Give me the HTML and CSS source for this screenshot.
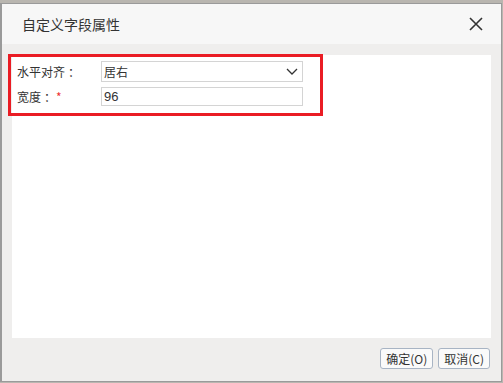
FILE: index.html
```html
<!DOCTYPE html>
<html lang="zh-CN">
<head>
  <meta charset="UTF-8">
  <title>自定义字段属性</title>
  <link rel="stylesheet" href="styles.css">
</head>
<body>
  <div class="dialog">
    <div class="dialog-header">
      <span class="dialog-title">自定义字段属性</span>
      <span class="dialog-close">
        <svg width="14" height="14" viewBox="0 0 14 14"><path d="M1 1L13 13M13 1L1 13" stroke="#333" stroke-width="1.6" fill="none"/></svg>
      </span>
    </div>
    <div class="dialog-body">
      <div class="panel">
        <div class="field-box">
          <div class="row">
            <label class="label">水平对齐<span class="colon">：</span></label>
            <div class="select">
              <span>居右</span>
              <svg width="12" height="8" viewBox="0 0 12 8"><path d="M1 1L6 6L11 1" stroke="#333" stroke-width="1.3" fill="none"/></svg>
            </div>
          </div>
          <div class="row">
            <label class="label">宽度<span class="colon">：</span><span class="req">*</span></label>
            <input class="input" type="text" value="96">
          </div>
        </div>
      </div>
      <div class="footer">
        <button class="btn">确定(O)</button>
        <button class="btn">取消(C)</button>
      </div>
    </div>
  </div>
</body>
</html>
```

FILE: styles.css
```css
* {
  box-sizing: border-box;
}
body {
  margin: 0;
  padding-top: 3px;
  background: #b9b6b0;
  font-family: "Noto Sans CJK SC", "Liberation Sans", sans-serif;
  font-size: 12px;
  color: #333;
  height: 383px;
  overflow: hidden;
}
.dialog {
  width: 502px;
  height: 379px;
  border: 1px solid #9a9a9a;
  border-left-width: 2px;
  background: #efeeed;
  display: flex;
  flex-direction: column;
}
.dialog-header {
  height: 40px;
  background: #f7f7f7;
  display: flex;
  align-items: center;
  justify-content: space-between;
  padding: 0 18px 0 20px;
}
.dialog-title {
  font-size: 14px;
  color: #333;
}
.dialog-close {
  display: flex;
}
.dialog-body {
  flex: 1;
  padding: 11px 9px 0 10px;
  display: flex;
  flex-direction: column;
}
.panel {
  height: 283px;
  background: #fff;
  width: 479px;
  position: relative;
}
.field-box {
  position: absolute;
  left: -4px;
  top: -1px;
  width: 315px;
  height: 62px;
  border: 3px solid #ea1c24;
  padding: 4px 0 0 6px;
  display: flex;
  flex-direction: column;
  gap: 5px;
}
.row {
  display: flex;
  align-items: center;
}
.label {
  width: 84px;
  white-space: nowrap;
}
.colon {
  display: inline-block;
  padding: 0 4px 0 3px;
}
.req {
  color: #e33;
  margin-left: -4px;
}
.select {
  width: 202px;
  height: 21px;
  border: 1px solid #d4d4d4;
  display: flex;
  align-items: center;
  justify-content: space-between;
  padding: 0 4px 0 2px;
}
.input {
  width: 202px;
  height: 19px;
  border: 1px solid #d4d4d4;
  padding: 0 2px;
  font-family: "Liberation Sans", sans-serif;
  font-size: 13px;
  color: #333;
  outline: none;
}
.footer {
  display: flex;
  justify-content: flex-end;
  gap: 5px;
  padding: 10px 2px 0 0;
}
.btn {
  height: 21px;
  padding: 0 5px;
  border: 1px solid #a8b4c4;
  border-radius: 3px;
  background: #fafafa;
  font: inherit;
  color: #333;
}
```
